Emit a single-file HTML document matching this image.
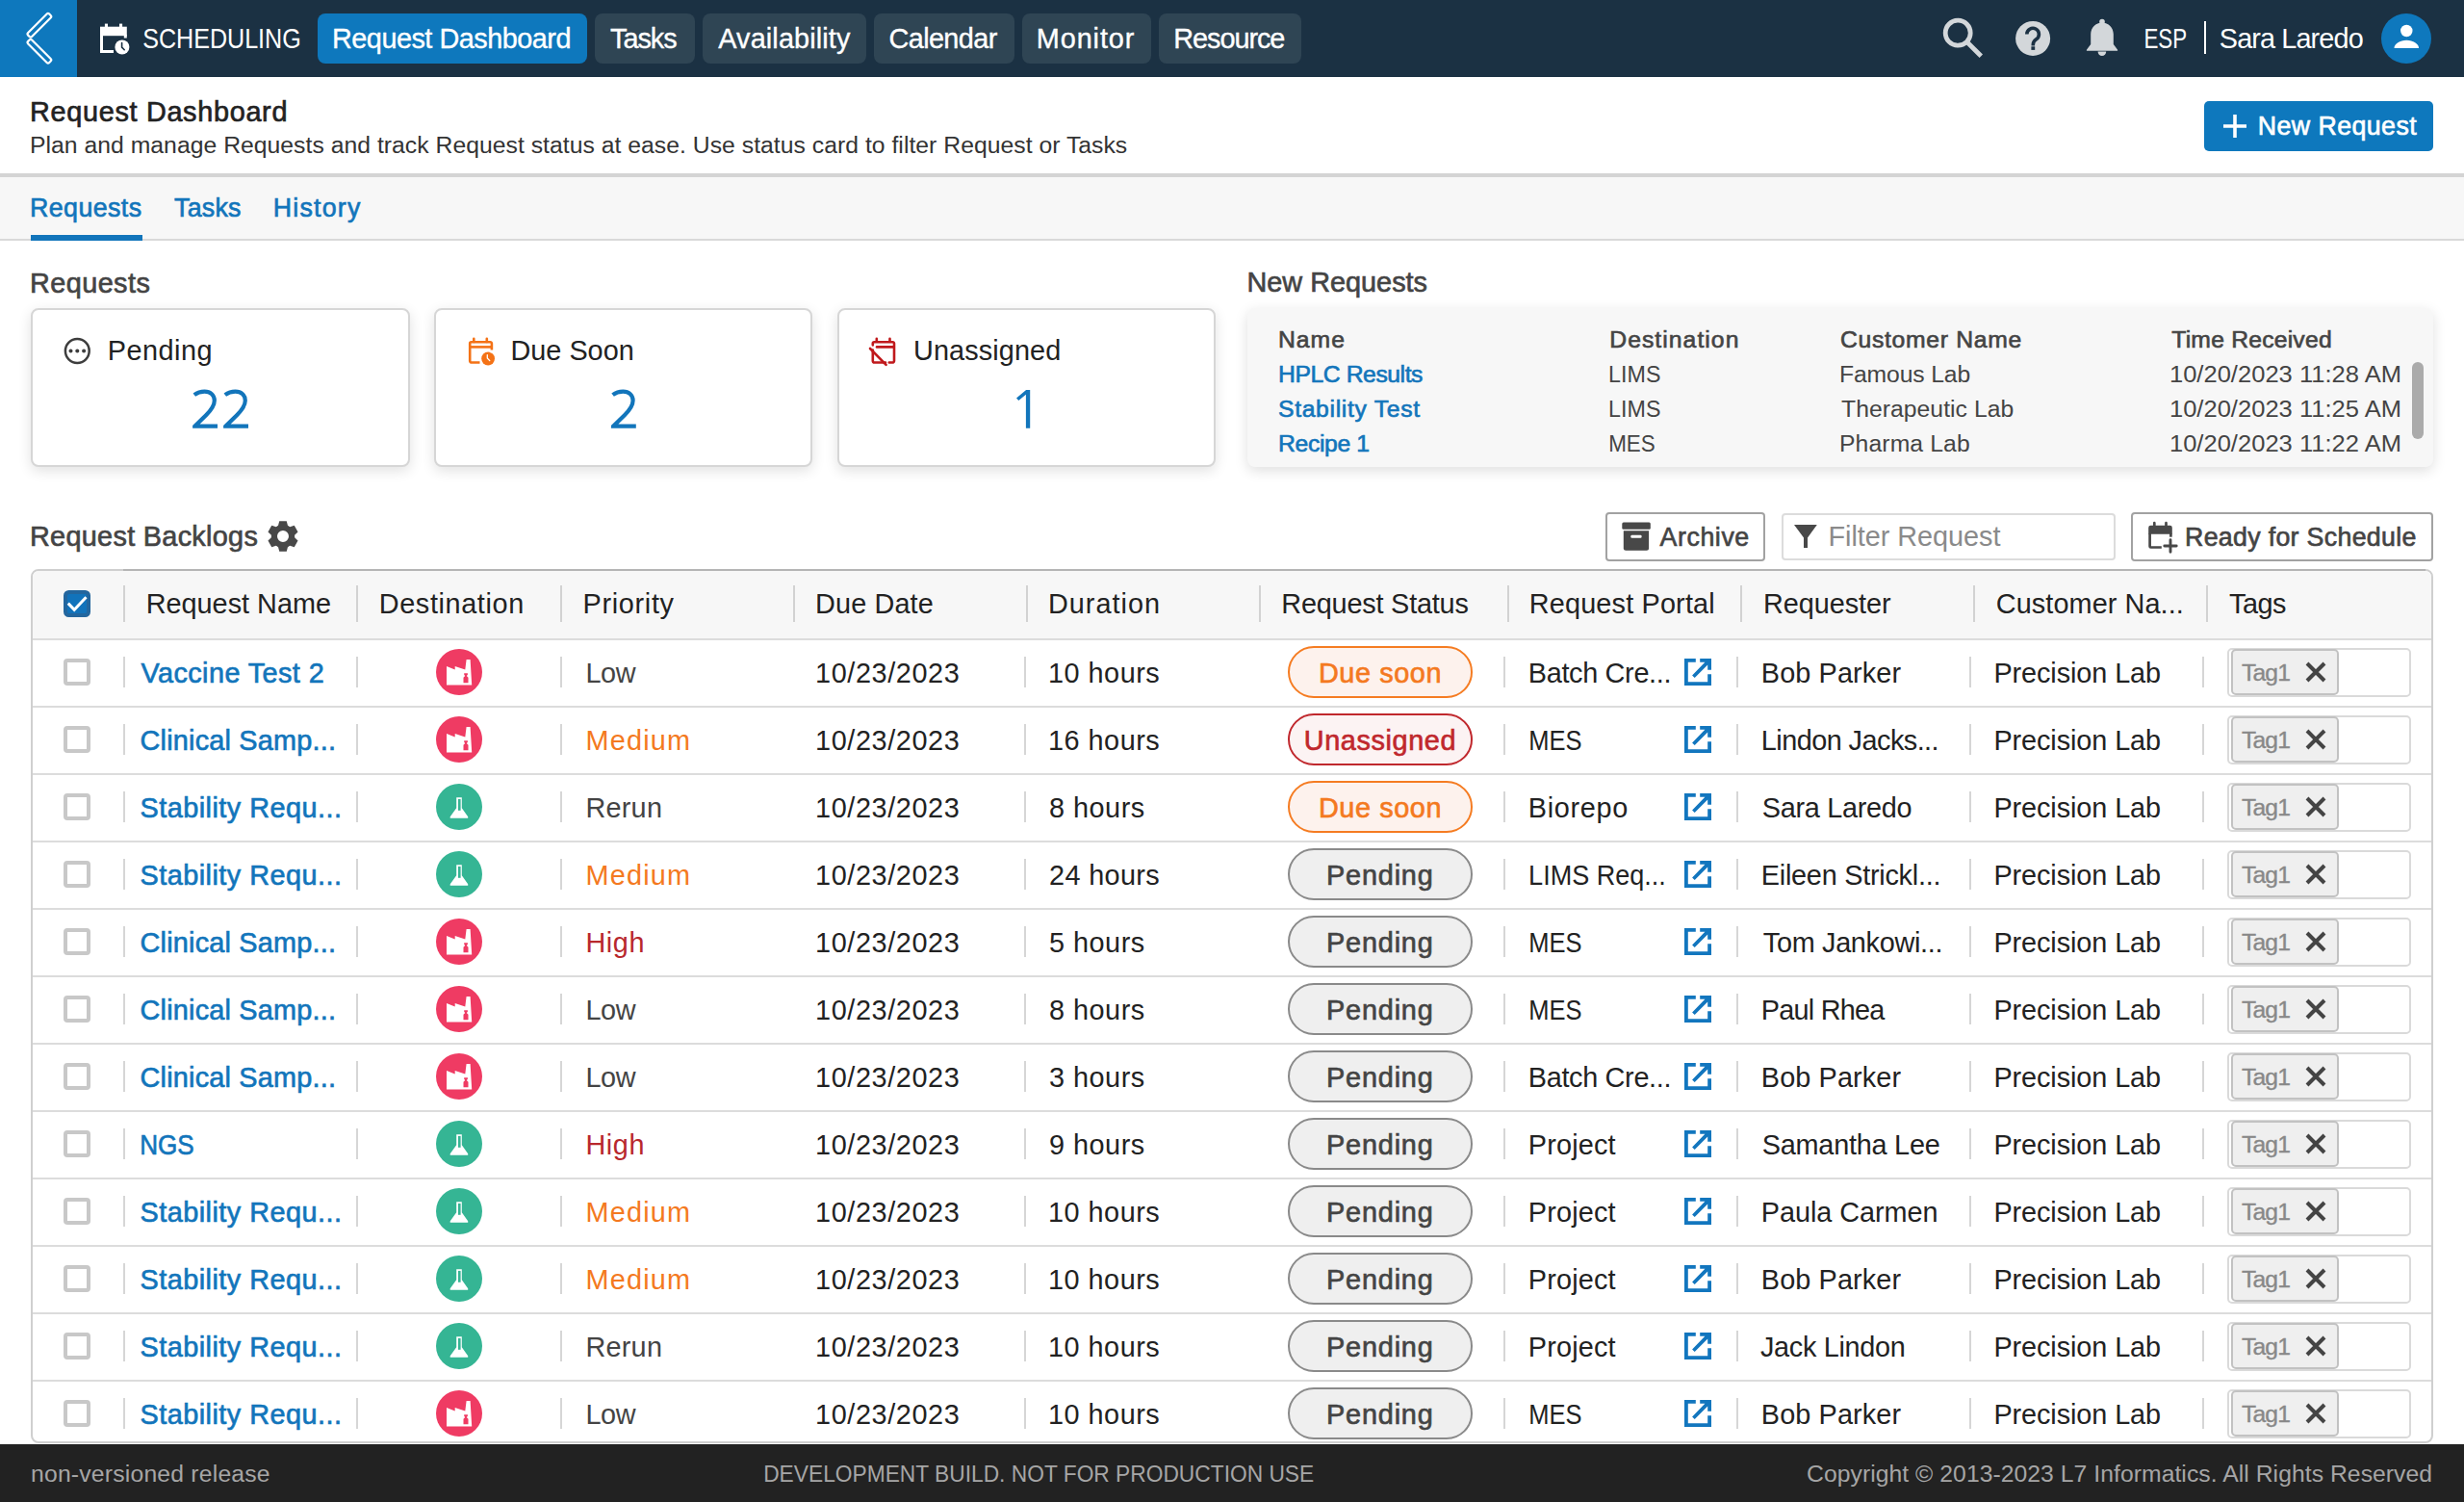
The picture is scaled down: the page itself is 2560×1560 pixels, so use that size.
<!DOCTYPE html><html><head><meta charset="utf-8"><style>
html,body{margin:0;padding:0;width:2560px;height:1560px;overflow:hidden;background:#fff;position:relative}
.t{position:absolute;font-family:"Liberation Sans",sans-serif;white-space:nowrap}
</style></head><body>
<div style="position:absolute;left:0;top:0;width:2560px;height:80px;background:#1b3143"></div>
<div style="position:absolute;left:0;top:0;width:80px;height:80px;background:#0e78bd"></div>
<svg style="position:absolute;left:0;top:0" width="80" height="80" viewBox="0 0 80 80">
<g fill="none" stroke="#fff" stroke-width="2.2">
<rect x="-15.6" y="-2.8" width="31.2" height="5.6" rx="1.8" transform="translate(40.9,26.3) rotate(-45)"/>
<rect x="-15.6" y="-2.8" width="31.2" height="5.6" rx="1.8" transform="translate(40.9,53.2) rotate(45)"/>
</g></svg>
<svg style="position:absolute;left:100px;top:20px" width="40" height="40" viewBox="100 20 40 40">
<path fill="#fff" d="M104 27.7h27.8v9.5h-27.8z"/>
<path fill="none" stroke="#fff" stroke-width="3" d="M105.5 36v17.5h12.5"/>
<path fill="none" stroke="#fff" stroke-width="3" d="M130.3 36v3.5"/>
<rect x="108.9" y="24.6" width="3.1" height="4" fill="#fff"/>
<rect x="124" y="24.6" width="3.1" height="4" fill="#fff"/>
<circle cx="126.9" cy="48.9" r="9" fill="#1b3143"/>
<circle cx="126.9" cy="48.9" r="7.5" fill="#fff"/>
<path fill="none" stroke="#1b3143" stroke-width="1.6" stroke-linecap="round" d="M126.6 44.5v4.6l2.6 2.6"/>
</svg>
<div style="position:absolute;left:330px;top:14px;width:280px;height:52px;border-radius:8px;background:#0e78bd"></div>
<div style="position:absolute;left:618px;top:14px;width:104px;height:52px;border-radius:8px;background:#2f4554"></div>
<div style="position:absolute;left:730px;top:14px;width:170px;height:52px;border-radius:8px;background:#2f4554"></div>
<div style="position:absolute;left:908px;top:14px;width:146px;height:52px;border-radius:8px;background:#2f4554"></div>
<div style="position:absolute;left:1062px;top:14px;width:134px;height:52px;border-radius:8px;background:#2f4554"></div>
<div style="position:absolute;left:1204px;top:14px;width:148px;height:52px;border-radius:8px;background:#2f4554"></div>
<svg style="position:absolute;left:2010px;top:10px" width="60" height="60" viewBox="2010 10 60 60">
<circle cx="2034.2" cy="34.2" r="13" fill="none" stroke="#d3d7da" stroke-width="4.8"/>
<path d="M2044 44l14.3 14.3" stroke="#d3d7da" stroke-width="4.8"/>
</svg>
<svg style="position:absolute;left:2090px;top:18px" width="44" height="44" viewBox="2090 18 44 44">
<circle cx="2112.1" cy="39.9" r="18" fill="#d3d7da"/>
<path d="M2105.8 35.6a6.3 6.3 0 1 1 9.8 5.2c-2 1.4-3.3 2.8-3.3 5.4v1.2" fill="none" stroke="#1b3143" stroke-width="3.6"/>
<rect x="2110.4" y="48.3" width="3.8" height="3.6" fill="#1b3143"/>
</svg>
<svg style="position:absolute;left:2160px;top:14px" width="48" height="48" viewBox="2160 14 48 48">
<circle cx="2184" cy="22.5" r="2.8" fill="#d3d7da"/>
<path fill="#d3d7da" d="M2184 23.4c-6.6 0-11.8 5.2-11.8 12.2v10.5l-4.3 5.7v0.9h32.2v-0.9l-4.3-5.7v-10.5c0-7-5.2-12.2-11.8-12.2z"/>
<path fill="#d3d7da" d="M2179.6 53.6h8.6a4.3 4.3 0 0 1-8.6 0z"/>
</svg>
<div style="position:absolute;left:2290px;top:22px;width:2px;height:34px;background:#fff"></div>
<svg style="position:absolute;left:2474px;top:14px" width="52" height="52" viewBox="0 0 52 52">
<circle cx="26" cy="26" r="26" fill="#0e78bd"/>
<circle cx="26.3" cy="18" r="6.2" fill="#fff"/>
<path fill="#fff" d="M13.5 36c0-4.5 6-8.2 12.8-8.2s12.7 3.7 12.7 8.2z"/>
</svg>
<div style="position:absolute;left:2290px;top:105px;width:238px;height:52px;border-radius:5px;background:#0e78bd"></div>
<svg style="position:absolute;left:2308px;top:117px" width="28" height="28" viewBox="0 0 28 28"><path d="M14 2v24M2 14h24" stroke="#fff" stroke-width="3.6"/></svg>
<div style="position:absolute;left:0;top:180px;width:2560px;height:4px;background:#d4d4d4"></div>
<div style="position:absolute;left:0;top:184px;width:2560px;height:64px;background:#f7f7f7"></div>
<div style="position:absolute;left:0;top:248px;width:2560px;height:2px;background:#d9d9d9"></div>
<div style="position:absolute;left:32px;top:244px;width:116px;height:6px;background:#1275bb"></div>
<div style="position:absolute;left:32px;top:320px;width:390px;height:161px;border:2px solid #d6d6d6;border-radius:8px;background:#fff;box-shadow:0 4px 14px rgba(0,0,0,0.12)"></div>
<div style="position:absolute;left:451px;top:320px;width:389px;height:161px;border:2px solid #d6d6d6;border-radius:8px;background:#fff;box-shadow:0 4px 14px rgba(0,0,0,0.12)"></div>
<div style="position:absolute;left:870px;top:320px;width:389px;height:161px;border:2px solid #d6d6d6;border-radius:8px;background:#fff;box-shadow:0 4px 14px rgba(0,0,0,0.12)"></div>
<svg style="position:absolute;left:0;top:0;overflow:visible" width="1300" height="460"><defs><clipPath id="twoclip"><rect x="0" y="-2" width="30" height="44"/></clipPath></defs><g transform="translate(200.1,404.6)"><path clip-path="url(#twoclip)" d="M1.7 5.6C5 3.1 8.5 2.1 12.4 2.1C18.7 2.1 22.7 5.8 22.7 11.4C22.7 16.6 20.2 20.4 14.2 26.3L2.2 38.1H25.9" fill="none" stroke="#1275bb" stroke-width="4.2" stroke-linejoin="miter"/></g><g transform="translate(232.1,404.6)"><path clip-path="url(#twoclip)" d="M1.7 5.6C5 3.1 8.5 2.1 12.4 2.1C18.7 2.1 22.7 5.8 22.7 11.4C22.7 16.6 20.2 20.4 14.2 26.3L2.2 38.1H25.9" fill="none" stroke="#1275bb" stroke-width="4.2" stroke-linejoin="miter"/></g><g transform="translate(634.9,404.6)"><path clip-path="url(#twoclip)" d="M1.7 5.6C5 3.1 8.5 2.1 12.4 2.1C18.7 2.1 22.7 5.8 22.7 11.4C22.7 16.6 20.2 20.4 14.2 26.3L2.2 38.1H25.9" fill="none" stroke="#1275bb" stroke-width="4.2" stroke-linejoin="miter"/></g><path fill="#1275bb" d="M1056 413.5L1066.1 405.1H1070.2V444.8H1065.9V409.8L1058.3 416.1Z"/></svg>
<svg style="position:absolute;left:60px;top:344px" width="40" height="40" viewBox="60 344 40 40">
<circle cx="80.3" cy="364.5" r="12.4" fill="none" stroke="#3d3d3d" stroke-width="2.5"/>
<circle cx="73.5" cy="364.5" r="2" fill="#3d3d3d"/><circle cx="80.3" cy="364.5" r="2" fill="#3d3d3d"/><circle cx="87.1" cy="364.5" r="2" fill="#3d3d3d"/>
</svg>
<svg style="position:absolute;left:480px;top:344px" width="40" height="40" viewBox="480 344 40 40">
<g fill="none" stroke="#f47216" stroke-width="2.6" stroke-linejoin="round">
<path d="M498.5 376.5h-8.5a1.8 1.8 0 0 1-1.8-1.8v-17.9a1.5 1.5 0 0 1 1.5-1.5h19.7a1.5 1.5 0 0 1 1.5 1.5v6.8"/>
<path d="M488.5 360.4h21.5"/>
<path d="M492.3 351.8v3.2M505.8 351.8v3.2" stroke-linecap="round"/>
</g>
<circle cx="507.1" cy="372.5" r="6.9" fill="#f47216"/>
<path d="M506.3 368.6v3.4l2.5 2.6" fill="none" stroke="#fff" stroke-width="1.3" stroke-linecap="round"/>
</svg>
<svg style="position:absolute;left:896px;top:344px" width="40" height="40" viewBox="896 344 40 40">
<g fill="none" stroke="#c0191c" stroke-width="2.6" stroke-linejoin="round" stroke-linecap="round">
<path d="M906.8 358.4a1.5 1.5 0 0 1 0 -0.4v-1.2a1.5 1.5 0 0 1 1.5-1.5h19.2a1.5 1.5 0 0 1 1.5 1.5v17.9a1.8 1.8 0 0 1-1.8 1.8h-3.4"/>
<path d="M911 360.4h17.3"/>
<path d="M906.8 363.6v11.1a1.8 1.8 0 0 0 1.8 1.8h11.4"/>
<path d="M910.8 351.8v3M924.5 351.8v3"/>
<path d="M904 362l16.6 16.8"/>
</g>
</svg>
<div style="position:absolute;left:1296px;top:320px;width:1232px;height:165px;border-radius:8px;background:#f7f7f7;box-shadow:0 4px 14px rgba(0,0,0,0.13)"></div>
<div style="position:absolute;left:2506px;top:376px;width:12px;height:80px;border-radius:6px;background:#ababab"></div>
<svg style="position:absolute;left:274px;top:537px" width="40" height="40" viewBox="-20 -20 40 40"><path id="gear" fill="#484848" fill-rule="evenodd" d="M4.96 -11.15 L3.78 -15.75 L-3.78 -15.75 L-4.96 -11.15 L-7.17 -9.87 L-11.75 -11.15 L-15.53 -4.60 L-12.13 -1.28 L-12.13 1.28 L-15.53 4.60 L-11.75 11.15 L-7.17 9.87 L-4.96 11.15 L-3.78 15.75 L3.78 15.75 L4.96 11.15 L7.17 9.87 L11.75 11.15 L15.53 4.60 L12.13 1.28 L12.13 -1.28 L15.53 -4.60 L11.75 -11.15 L7.17 -9.87Z M6 0 A6 6 0 1 0 -6 0 A6 6 0 1 0 6 0Z"/></svg>
<div style="position:absolute;left:1668px;top:532px;width:162px;height:47px;border:2px solid #a2a2a2;border-radius:4px;background:#fff"></div>
<svg style="position:absolute;left:1680px;top:538px" width="40" height="40" viewBox="1680 538 40 40">
<rect x="1685.3" y="542.5" width="29.5" height="7.3" rx="1.5" fill="#484848"/>
<path d="M1686.8 551.3h26.3v18a2.5 2.5 0 0 1-2.5 2.5h-21.3a2.5 2.5 0 0 1-2.5-2.5z" fill="#484848"/>
<rect x="1694.3" y="555.8" width="11.3" height="3" rx="1.2" fill="#fff"/>
</svg>
<div style="position:absolute;left:1851px;top:533px;width:343px;height:45px;border:2px solid #dcdcdc;border-radius:4px;background:#fff"></div>
<svg style="position:absolute;left:1860px;top:540px" width="32" height="32" viewBox="1860 540 32 32">
<path d="M1864 545h23.8l-9.8 13.6v10.4h-4v-10.4z" fill="#484848"/>
</svg>
<div style="position:absolute;left:2214px;top:532px;width:310px;height:47px;border:2px solid #a2a2a2;border-radius:4px;background:#fff"></div>
<svg style="position:absolute;left:2226px;top:538px" width="40" height="40" viewBox="2226 538 40 40">
<path d="M2232.2 548a2.3 2.3 0 0 1 2.3-2.3h20a2.3 2.3 0 0 1 2.3 2.3v6.8h-24.6z" fill="#484848"/>
<g fill="none" stroke="#484848" stroke-width="2.7">
<path d="M2233.6 554v13.5a1 1 0 0 0 1 1h11.2"/>
<path d="M2255.4 554v3.7"/>
<path d="M2238.3 543.2v3M2250.5 543.2v3" stroke-linecap="round"/>
<path d="M2255 560.8v12.4M2248.8 567h12.4" stroke-linecap="round" stroke-width="2.9"/>
</g>
</svg>
<div style="position:absolute;left:32px;top:591px;width:2492px;height:904px;border:2px solid #cfcfcf;border-radius:8px;background:#fff;overflow:hidden"><div style="position:absolute;left:0;top:0;width:100%;height:72px;background:#f7f7f7"></div></div><div style="position:absolute;left:128px;top:591px;width:2392px;height:2px;background:#b5b5b5"></div>
<div style="position:absolute;left:34px;top:663px;width:2492px;height:2px;background:#dcdcdc"></div>
<svg style="position:absolute;left:66px;top:613px" width="28" height="28" viewBox="0 0 28 28">
<rect x="2" y="2" width="24" height="24" rx="3.5" fill="#1273bb" stroke="#23669e" stroke-width="4"/>
<path d="M4.8 13.6l6.4 6.7 12.3-13" fill="none" stroke="#fff" stroke-width="3"/>
</svg>
<div style="position:absolute;left:128px;top:608px;width:2px;height:38px;background:#d2d2d2"></div>
<div style="position:absolute;left:370px;top:608px;width:2px;height:38px;background:#d2d2d2"></div>
<div style="position:absolute;left:582px;top:608px;width:2px;height:38px;background:#d2d2d2"></div>
<div style="position:absolute;left:824px;top:608px;width:2px;height:38px;background:#d2d2d2"></div>
<div style="position:absolute;left:1066px;top:608px;width:2px;height:38px;background:#d2d2d2"></div>
<div style="position:absolute;left:1308px;top:608px;width:2px;height:38px;background:#d2d2d2"></div>
<div style="position:absolute;left:1566px;top:608px;width:2px;height:38px;background:#d2d2d2"></div>
<div style="position:absolute;left:1808px;top:608px;width:2px;height:38px;background:#d2d2d2"></div>
<div style="position:absolute;left:2050px;top:608px;width:2px;height:38px;background:#d2d2d2"></div>
<div style="position:absolute;left:2292px;top:608px;width:2px;height:38px;background:#d2d2d2"></div>
<div style="position:absolute;left:34px;top:733px;width:2492px;height:2px;background:#dcdcdc"></div>
<div style="position:absolute;left:66px;top:684px;width:20px;height:20px;border:4px solid #c8c8c8;border-radius:4px;background:#fff"></div>
<div style="position:absolute;left:128px;top:682px;width:2px;height:32px;background:#d6d6d6"></div>
<div style="position:absolute;left:370px;top:682px;width:2px;height:32px;background:#d6d6d6"></div>
<div style="position:absolute;left:582px;top:682px;width:2px;height:32px;background:#d6d6d6"></div>
<div style="position:absolute;left:1064px;top:682px;width:2px;height:32px;background:#d6d6d6"></div>
<div style="position:absolute;left:1562px;top:682px;width:2px;height:32px;background:#d6d6d6"></div>
<div style="position:absolute;left:1804px;top:682px;width:2px;height:32px;background:#d6d6d6"></div>
<div style="position:absolute;left:2046px;top:682px;width:2px;height:32px;background:#d6d6d6"></div>
<div style="position:absolute;left:2288px;top:682px;width:2px;height:32px;background:#d6d6d6"></div>
<svg style="position:absolute;left:453px;top:674px" width="48" height="48" viewBox="0 0 48 48"><circle cx="24" cy="24" r="24" fill="#ef3b63"/><path fill="#fff" d="M11 18l8.7 3.4v-3.4l10.6 3.4 1.3-10.5h4l1.6 26.7h-26.2z"/><path fill="#ef3b63" d="M29.2 25.3h3.7v1.4l-1.1 1.2 1.7 1.9v5.4h-5v-5.4l1.7-1.9-1-1.2z"/></svg>
<div style="position:absolute;left:1338px;top:671px;width:188px;height:50px;border:2px solid #f57c22;border-radius:27px;background:#fdf2ed"></div>
<svg style="position:absolute;left:1750px;top:684px" width="28" height="28" viewBox="0 0 28 28"><g fill="#1276be">
<path d="M0 0h11.8v3.8h-8v20.4h20.4v-8h3.8v11.8h-28z"/><path d="M16.2 0h11.8v11.8h-3.8v-5.3l-13.5 13.5-2.6-2.6 13.3-13.6h-5.2z"/></g></svg>
<div style="position:absolute;left:2314px;top:672.5px;width:187px;height:47px;border:2px solid #dadada;border-radius:5px;background:#fff"></div>
<div style="position:absolute;left:2318px;top:674.4px;width:107.5px;height:43.4px;border:2px solid #c2c2c2;border-radius:5px;background:#efefef"></div>
<svg style="position:absolute;left:2394px;top:686px" width="24" height="24" viewBox="0 0 24 24"><path d="M3 3l18 18M21 3l-18 18" stroke="#444" stroke-width="4"/></svg>
<div style="position:absolute;left:34px;top:803px;width:2492px;height:2px;background:#dcdcdc"></div>
<div style="position:absolute;left:66px;top:754px;width:20px;height:20px;border:4px solid #c8c8c8;border-radius:4px;background:#fff"></div>
<div style="position:absolute;left:128px;top:752px;width:2px;height:32px;background:#d6d6d6"></div>
<div style="position:absolute;left:370px;top:752px;width:2px;height:32px;background:#d6d6d6"></div>
<div style="position:absolute;left:582px;top:752px;width:2px;height:32px;background:#d6d6d6"></div>
<div style="position:absolute;left:1064px;top:752px;width:2px;height:32px;background:#d6d6d6"></div>
<div style="position:absolute;left:1562px;top:752px;width:2px;height:32px;background:#d6d6d6"></div>
<div style="position:absolute;left:1804px;top:752px;width:2px;height:32px;background:#d6d6d6"></div>
<div style="position:absolute;left:2046px;top:752px;width:2px;height:32px;background:#d6d6d6"></div>
<div style="position:absolute;left:2288px;top:752px;width:2px;height:32px;background:#d6d6d6"></div>
<svg style="position:absolute;left:453px;top:744px" width="48" height="48" viewBox="0 0 48 48"><circle cx="24" cy="24" r="24" fill="#ef3b63"/><path fill="#fff" d="M11 18l8.7 3.4v-3.4l10.6 3.4 1.3-10.5h4l1.6 26.7h-26.2z"/><path fill="#ef3b63" d="M29.2 25.3h3.7v1.4l-1.1 1.2 1.7 1.9v5.4h-5v-5.4l1.7-1.9-1-1.2z"/></svg>
<div style="position:absolute;left:1338px;top:741px;width:188px;height:50px;border:2px solid #c0282d;border-radius:27px;background:#fcf3f3"></div>
<svg style="position:absolute;left:1750px;top:754px" width="28" height="28" viewBox="0 0 28 28"><g fill="#1276be">
<path d="M0 0h11.8v3.8h-8v20.4h20.4v-8h3.8v11.8h-28z"/><path d="M16.2 0h11.8v11.8h-3.8v-5.3l-13.5 13.5-2.6-2.6 13.3-13.6h-5.2z"/></g></svg>
<div style="position:absolute;left:2314px;top:742.5px;width:187px;height:47px;border:2px solid #dadada;border-radius:5px;background:#fff"></div>
<div style="position:absolute;left:2318px;top:744.4px;width:107.5px;height:43.4px;border:2px solid #c2c2c2;border-radius:5px;background:#efefef"></div>
<svg style="position:absolute;left:2394px;top:756px" width="24" height="24" viewBox="0 0 24 24"><path d="M3 3l18 18M21 3l-18 18" stroke="#444" stroke-width="4"/></svg>
<div style="position:absolute;left:34px;top:873px;width:2492px;height:2px;background:#dcdcdc"></div>
<div style="position:absolute;left:66px;top:824px;width:20px;height:20px;border:4px solid #c8c8c8;border-radius:4px;background:#fff"></div>
<div style="position:absolute;left:128px;top:822px;width:2px;height:32px;background:#d6d6d6"></div>
<div style="position:absolute;left:370px;top:822px;width:2px;height:32px;background:#d6d6d6"></div>
<div style="position:absolute;left:582px;top:822px;width:2px;height:32px;background:#d6d6d6"></div>
<div style="position:absolute;left:1064px;top:822px;width:2px;height:32px;background:#d6d6d6"></div>
<div style="position:absolute;left:1562px;top:822px;width:2px;height:32px;background:#d6d6d6"></div>
<div style="position:absolute;left:1804px;top:822px;width:2px;height:32px;background:#d6d6d6"></div>
<div style="position:absolute;left:2046px;top:822px;width:2px;height:32px;background:#d6d6d6"></div>
<div style="position:absolute;left:2288px;top:822px;width:2px;height:32px;background:#d6d6d6"></div>
<svg style="position:absolute;left:453px;top:814px" width="48" height="48" viewBox="0 0 48 48"><circle cx="24" cy="24" r="24" fill="#35b594"/><path fill="#fff" d="M21.2 14.3h5.6v11l6.4 9v1.5h-18.5v-1.5l6.5-9z"/><path fill="#35b594" d="M23 15.9h2.6v11.9h-2.6z"/></svg>
<div style="position:absolute;left:1338px;top:811px;width:188px;height:50px;border:2px solid #f57c22;border-radius:27px;background:#fdf2ed"></div>
<svg style="position:absolute;left:1750px;top:824px" width="28" height="28" viewBox="0 0 28 28"><g fill="#1276be">
<path d="M0 0h11.8v3.8h-8v20.4h20.4v-8h3.8v11.8h-28z"/><path d="M16.2 0h11.8v11.8h-3.8v-5.3l-13.5 13.5-2.6-2.6 13.3-13.6h-5.2z"/></g></svg>
<div style="position:absolute;left:2314px;top:812.5px;width:187px;height:47px;border:2px solid #dadada;border-radius:5px;background:#fff"></div>
<div style="position:absolute;left:2318px;top:814.4px;width:107.5px;height:43.4px;border:2px solid #c2c2c2;border-radius:5px;background:#efefef"></div>
<svg style="position:absolute;left:2394px;top:826px" width="24" height="24" viewBox="0 0 24 24"><path d="M3 3l18 18M21 3l-18 18" stroke="#444" stroke-width="4"/></svg>
<div style="position:absolute;left:34px;top:943px;width:2492px;height:2px;background:#dcdcdc"></div>
<div style="position:absolute;left:66px;top:894px;width:20px;height:20px;border:4px solid #c8c8c8;border-radius:4px;background:#fff"></div>
<div style="position:absolute;left:128px;top:892px;width:2px;height:32px;background:#d6d6d6"></div>
<div style="position:absolute;left:370px;top:892px;width:2px;height:32px;background:#d6d6d6"></div>
<div style="position:absolute;left:582px;top:892px;width:2px;height:32px;background:#d6d6d6"></div>
<div style="position:absolute;left:1064px;top:892px;width:2px;height:32px;background:#d6d6d6"></div>
<div style="position:absolute;left:1562px;top:892px;width:2px;height:32px;background:#d6d6d6"></div>
<div style="position:absolute;left:1804px;top:892px;width:2px;height:32px;background:#d6d6d6"></div>
<div style="position:absolute;left:2046px;top:892px;width:2px;height:32px;background:#d6d6d6"></div>
<div style="position:absolute;left:2288px;top:892px;width:2px;height:32px;background:#d6d6d6"></div>
<svg style="position:absolute;left:453px;top:884px" width="48" height="48" viewBox="0 0 48 48"><circle cx="24" cy="24" r="24" fill="#35b594"/><path fill="#fff" d="M21.2 14.3h5.6v11l6.4 9v1.5h-18.5v-1.5l6.5-9z"/><path fill="#35b594" d="M23 15.9h2.6v11.9h-2.6z"/></svg>
<div style="position:absolute;left:1338px;top:881px;width:188px;height:50px;border:2px solid #8a8a8a;border-radius:27px;background:#efefef"></div>
<svg style="position:absolute;left:1750px;top:894px" width="28" height="28" viewBox="0 0 28 28"><g fill="#1276be">
<path d="M0 0h11.8v3.8h-8v20.4h20.4v-8h3.8v11.8h-28z"/><path d="M16.2 0h11.8v11.8h-3.8v-5.3l-13.5 13.5-2.6-2.6 13.3-13.6h-5.2z"/></g></svg>
<div style="position:absolute;left:2314px;top:882.5px;width:187px;height:47px;border:2px solid #dadada;border-radius:5px;background:#fff"></div>
<div style="position:absolute;left:2318px;top:884.4px;width:107.5px;height:43.4px;border:2px solid #c2c2c2;border-radius:5px;background:#efefef"></div>
<svg style="position:absolute;left:2394px;top:896px" width="24" height="24" viewBox="0 0 24 24"><path d="M3 3l18 18M21 3l-18 18" stroke="#444" stroke-width="4"/></svg>
<div style="position:absolute;left:34px;top:1013px;width:2492px;height:2px;background:#dcdcdc"></div>
<div style="position:absolute;left:66px;top:964px;width:20px;height:20px;border:4px solid #c8c8c8;border-radius:4px;background:#fff"></div>
<div style="position:absolute;left:128px;top:962px;width:2px;height:32px;background:#d6d6d6"></div>
<div style="position:absolute;left:370px;top:962px;width:2px;height:32px;background:#d6d6d6"></div>
<div style="position:absolute;left:582px;top:962px;width:2px;height:32px;background:#d6d6d6"></div>
<div style="position:absolute;left:1064px;top:962px;width:2px;height:32px;background:#d6d6d6"></div>
<div style="position:absolute;left:1562px;top:962px;width:2px;height:32px;background:#d6d6d6"></div>
<div style="position:absolute;left:1804px;top:962px;width:2px;height:32px;background:#d6d6d6"></div>
<div style="position:absolute;left:2046px;top:962px;width:2px;height:32px;background:#d6d6d6"></div>
<div style="position:absolute;left:2288px;top:962px;width:2px;height:32px;background:#d6d6d6"></div>
<svg style="position:absolute;left:453px;top:954px" width="48" height="48" viewBox="0 0 48 48"><circle cx="24" cy="24" r="24" fill="#ef3b63"/><path fill="#fff" d="M11 18l8.7 3.4v-3.4l10.6 3.4 1.3-10.5h4l1.6 26.7h-26.2z"/><path fill="#ef3b63" d="M29.2 25.3h3.7v1.4l-1.1 1.2 1.7 1.9v5.4h-5v-5.4l1.7-1.9-1-1.2z"/></svg>
<div style="position:absolute;left:1338px;top:951px;width:188px;height:50px;border:2px solid #8a8a8a;border-radius:27px;background:#efefef"></div>
<svg style="position:absolute;left:1750px;top:964px" width="28" height="28" viewBox="0 0 28 28"><g fill="#1276be">
<path d="M0 0h11.8v3.8h-8v20.4h20.4v-8h3.8v11.8h-28z"/><path d="M16.2 0h11.8v11.8h-3.8v-5.3l-13.5 13.5-2.6-2.6 13.3-13.6h-5.2z"/></g></svg>
<div style="position:absolute;left:2314px;top:952.5px;width:187px;height:47px;border:2px solid #dadada;border-radius:5px;background:#fff"></div>
<div style="position:absolute;left:2318px;top:954.4px;width:107.5px;height:43.4px;border:2px solid #c2c2c2;border-radius:5px;background:#efefef"></div>
<svg style="position:absolute;left:2394px;top:966px" width="24" height="24" viewBox="0 0 24 24"><path d="M3 3l18 18M21 3l-18 18" stroke="#444" stroke-width="4"/></svg>
<div style="position:absolute;left:34px;top:1083px;width:2492px;height:2px;background:#dcdcdc"></div>
<div style="position:absolute;left:66px;top:1034px;width:20px;height:20px;border:4px solid #c8c8c8;border-radius:4px;background:#fff"></div>
<div style="position:absolute;left:128px;top:1032px;width:2px;height:32px;background:#d6d6d6"></div>
<div style="position:absolute;left:370px;top:1032px;width:2px;height:32px;background:#d6d6d6"></div>
<div style="position:absolute;left:582px;top:1032px;width:2px;height:32px;background:#d6d6d6"></div>
<div style="position:absolute;left:1064px;top:1032px;width:2px;height:32px;background:#d6d6d6"></div>
<div style="position:absolute;left:1562px;top:1032px;width:2px;height:32px;background:#d6d6d6"></div>
<div style="position:absolute;left:1804px;top:1032px;width:2px;height:32px;background:#d6d6d6"></div>
<div style="position:absolute;left:2046px;top:1032px;width:2px;height:32px;background:#d6d6d6"></div>
<div style="position:absolute;left:2288px;top:1032px;width:2px;height:32px;background:#d6d6d6"></div>
<svg style="position:absolute;left:453px;top:1024px" width="48" height="48" viewBox="0 0 48 48"><circle cx="24" cy="24" r="24" fill="#ef3b63"/><path fill="#fff" d="M11 18l8.7 3.4v-3.4l10.6 3.4 1.3-10.5h4l1.6 26.7h-26.2z"/><path fill="#ef3b63" d="M29.2 25.3h3.7v1.4l-1.1 1.2 1.7 1.9v5.4h-5v-5.4l1.7-1.9-1-1.2z"/></svg>
<div style="position:absolute;left:1338px;top:1021px;width:188px;height:50px;border:2px solid #8a8a8a;border-radius:27px;background:#efefef"></div>
<svg style="position:absolute;left:1750px;top:1034px" width="28" height="28" viewBox="0 0 28 28"><g fill="#1276be">
<path d="M0 0h11.8v3.8h-8v20.4h20.4v-8h3.8v11.8h-28z"/><path d="M16.2 0h11.8v11.8h-3.8v-5.3l-13.5 13.5-2.6-2.6 13.3-13.6h-5.2z"/></g></svg>
<div style="position:absolute;left:2314px;top:1022.5px;width:187px;height:47px;border:2px solid #dadada;border-radius:5px;background:#fff"></div>
<div style="position:absolute;left:2318px;top:1024.4px;width:107.5px;height:43.4px;border:2px solid #c2c2c2;border-radius:5px;background:#efefef"></div>
<svg style="position:absolute;left:2394px;top:1036px" width="24" height="24" viewBox="0 0 24 24"><path d="M3 3l18 18M21 3l-18 18" stroke="#444" stroke-width="4"/></svg>
<div style="position:absolute;left:34px;top:1153px;width:2492px;height:2px;background:#dcdcdc"></div>
<div style="position:absolute;left:66px;top:1104px;width:20px;height:20px;border:4px solid #c8c8c8;border-radius:4px;background:#fff"></div>
<div style="position:absolute;left:128px;top:1102px;width:2px;height:32px;background:#d6d6d6"></div>
<div style="position:absolute;left:370px;top:1102px;width:2px;height:32px;background:#d6d6d6"></div>
<div style="position:absolute;left:582px;top:1102px;width:2px;height:32px;background:#d6d6d6"></div>
<div style="position:absolute;left:1064px;top:1102px;width:2px;height:32px;background:#d6d6d6"></div>
<div style="position:absolute;left:1562px;top:1102px;width:2px;height:32px;background:#d6d6d6"></div>
<div style="position:absolute;left:1804px;top:1102px;width:2px;height:32px;background:#d6d6d6"></div>
<div style="position:absolute;left:2046px;top:1102px;width:2px;height:32px;background:#d6d6d6"></div>
<div style="position:absolute;left:2288px;top:1102px;width:2px;height:32px;background:#d6d6d6"></div>
<svg style="position:absolute;left:453px;top:1094px" width="48" height="48" viewBox="0 0 48 48"><circle cx="24" cy="24" r="24" fill="#ef3b63"/><path fill="#fff" d="M11 18l8.7 3.4v-3.4l10.6 3.4 1.3-10.5h4l1.6 26.7h-26.2z"/><path fill="#ef3b63" d="M29.2 25.3h3.7v1.4l-1.1 1.2 1.7 1.9v5.4h-5v-5.4l1.7-1.9-1-1.2z"/></svg>
<div style="position:absolute;left:1338px;top:1091px;width:188px;height:50px;border:2px solid #8a8a8a;border-radius:27px;background:#efefef"></div>
<svg style="position:absolute;left:1750px;top:1104px" width="28" height="28" viewBox="0 0 28 28"><g fill="#1276be">
<path d="M0 0h11.8v3.8h-8v20.4h20.4v-8h3.8v11.8h-28z"/><path d="M16.2 0h11.8v11.8h-3.8v-5.3l-13.5 13.5-2.6-2.6 13.3-13.6h-5.2z"/></g></svg>
<div style="position:absolute;left:2314px;top:1092.5px;width:187px;height:47px;border:2px solid #dadada;border-radius:5px;background:#fff"></div>
<div style="position:absolute;left:2318px;top:1094.4px;width:107.5px;height:43.4px;border:2px solid #c2c2c2;border-radius:5px;background:#efefef"></div>
<svg style="position:absolute;left:2394px;top:1106px" width="24" height="24" viewBox="0 0 24 24"><path d="M3 3l18 18M21 3l-18 18" stroke="#444" stroke-width="4"/></svg>
<div style="position:absolute;left:34px;top:1223px;width:2492px;height:2px;background:#dcdcdc"></div>
<div style="position:absolute;left:66px;top:1174px;width:20px;height:20px;border:4px solid #c8c8c8;border-radius:4px;background:#fff"></div>
<div style="position:absolute;left:128px;top:1172px;width:2px;height:32px;background:#d6d6d6"></div>
<div style="position:absolute;left:370px;top:1172px;width:2px;height:32px;background:#d6d6d6"></div>
<div style="position:absolute;left:582px;top:1172px;width:2px;height:32px;background:#d6d6d6"></div>
<div style="position:absolute;left:1064px;top:1172px;width:2px;height:32px;background:#d6d6d6"></div>
<div style="position:absolute;left:1562px;top:1172px;width:2px;height:32px;background:#d6d6d6"></div>
<div style="position:absolute;left:1804px;top:1172px;width:2px;height:32px;background:#d6d6d6"></div>
<div style="position:absolute;left:2046px;top:1172px;width:2px;height:32px;background:#d6d6d6"></div>
<div style="position:absolute;left:2288px;top:1172px;width:2px;height:32px;background:#d6d6d6"></div>
<svg style="position:absolute;left:453px;top:1164px" width="48" height="48" viewBox="0 0 48 48"><circle cx="24" cy="24" r="24" fill="#35b594"/><path fill="#fff" d="M21.2 14.3h5.6v11l6.4 9v1.5h-18.5v-1.5l6.5-9z"/><path fill="#35b594" d="M23 15.9h2.6v11.9h-2.6z"/></svg>
<div style="position:absolute;left:1338px;top:1161px;width:188px;height:50px;border:2px solid #8a8a8a;border-radius:27px;background:#efefef"></div>
<svg style="position:absolute;left:1750px;top:1174px" width="28" height="28" viewBox="0 0 28 28"><g fill="#1276be">
<path d="M0 0h11.8v3.8h-8v20.4h20.4v-8h3.8v11.8h-28z"/><path d="M16.2 0h11.8v11.8h-3.8v-5.3l-13.5 13.5-2.6-2.6 13.3-13.6h-5.2z"/></g></svg>
<div style="position:absolute;left:2314px;top:1162.5px;width:187px;height:47px;border:2px solid #dadada;border-radius:5px;background:#fff"></div>
<div style="position:absolute;left:2318px;top:1164.4px;width:107.5px;height:43.4px;border:2px solid #c2c2c2;border-radius:5px;background:#efefef"></div>
<svg style="position:absolute;left:2394px;top:1176px" width="24" height="24" viewBox="0 0 24 24"><path d="M3 3l18 18M21 3l-18 18" stroke="#444" stroke-width="4"/></svg>
<div style="position:absolute;left:34px;top:1293px;width:2492px;height:2px;background:#dcdcdc"></div>
<div style="position:absolute;left:66px;top:1244px;width:20px;height:20px;border:4px solid #c8c8c8;border-radius:4px;background:#fff"></div>
<div style="position:absolute;left:128px;top:1242px;width:2px;height:32px;background:#d6d6d6"></div>
<div style="position:absolute;left:370px;top:1242px;width:2px;height:32px;background:#d6d6d6"></div>
<div style="position:absolute;left:582px;top:1242px;width:2px;height:32px;background:#d6d6d6"></div>
<div style="position:absolute;left:1064px;top:1242px;width:2px;height:32px;background:#d6d6d6"></div>
<div style="position:absolute;left:1562px;top:1242px;width:2px;height:32px;background:#d6d6d6"></div>
<div style="position:absolute;left:1804px;top:1242px;width:2px;height:32px;background:#d6d6d6"></div>
<div style="position:absolute;left:2046px;top:1242px;width:2px;height:32px;background:#d6d6d6"></div>
<div style="position:absolute;left:2288px;top:1242px;width:2px;height:32px;background:#d6d6d6"></div>
<svg style="position:absolute;left:453px;top:1234px" width="48" height="48" viewBox="0 0 48 48"><circle cx="24" cy="24" r="24" fill="#35b594"/><path fill="#fff" d="M21.2 14.3h5.6v11l6.4 9v1.5h-18.5v-1.5l6.5-9z"/><path fill="#35b594" d="M23 15.9h2.6v11.9h-2.6z"/></svg>
<div style="position:absolute;left:1338px;top:1231px;width:188px;height:50px;border:2px solid #8a8a8a;border-radius:27px;background:#efefef"></div>
<svg style="position:absolute;left:1750px;top:1244px" width="28" height="28" viewBox="0 0 28 28"><g fill="#1276be">
<path d="M0 0h11.8v3.8h-8v20.4h20.4v-8h3.8v11.8h-28z"/><path d="M16.2 0h11.8v11.8h-3.8v-5.3l-13.5 13.5-2.6-2.6 13.3-13.6h-5.2z"/></g></svg>
<div style="position:absolute;left:2314px;top:1232.5px;width:187px;height:47px;border:2px solid #dadada;border-radius:5px;background:#fff"></div>
<div style="position:absolute;left:2318px;top:1234.4px;width:107.5px;height:43.4px;border:2px solid #c2c2c2;border-radius:5px;background:#efefef"></div>
<svg style="position:absolute;left:2394px;top:1246px" width="24" height="24" viewBox="0 0 24 24"><path d="M3 3l18 18M21 3l-18 18" stroke="#444" stroke-width="4"/></svg>
<div style="position:absolute;left:34px;top:1363px;width:2492px;height:2px;background:#dcdcdc"></div>
<div style="position:absolute;left:66px;top:1314px;width:20px;height:20px;border:4px solid #c8c8c8;border-radius:4px;background:#fff"></div>
<div style="position:absolute;left:128px;top:1312px;width:2px;height:32px;background:#d6d6d6"></div>
<div style="position:absolute;left:370px;top:1312px;width:2px;height:32px;background:#d6d6d6"></div>
<div style="position:absolute;left:582px;top:1312px;width:2px;height:32px;background:#d6d6d6"></div>
<div style="position:absolute;left:1064px;top:1312px;width:2px;height:32px;background:#d6d6d6"></div>
<div style="position:absolute;left:1562px;top:1312px;width:2px;height:32px;background:#d6d6d6"></div>
<div style="position:absolute;left:1804px;top:1312px;width:2px;height:32px;background:#d6d6d6"></div>
<div style="position:absolute;left:2046px;top:1312px;width:2px;height:32px;background:#d6d6d6"></div>
<div style="position:absolute;left:2288px;top:1312px;width:2px;height:32px;background:#d6d6d6"></div>
<svg style="position:absolute;left:453px;top:1304px" width="48" height="48" viewBox="0 0 48 48"><circle cx="24" cy="24" r="24" fill="#35b594"/><path fill="#fff" d="M21.2 14.3h5.6v11l6.4 9v1.5h-18.5v-1.5l6.5-9z"/><path fill="#35b594" d="M23 15.9h2.6v11.9h-2.6z"/></svg>
<div style="position:absolute;left:1338px;top:1301px;width:188px;height:50px;border:2px solid #8a8a8a;border-radius:27px;background:#efefef"></div>
<svg style="position:absolute;left:1750px;top:1314px" width="28" height="28" viewBox="0 0 28 28"><g fill="#1276be">
<path d="M0 0h11.8v3.8h-8v20.4h20.4v-8h3.8v11.8h-28z"/><path d="M16.2 0h11.8v11.8h-3.8v-5.3l-13.5 13.5-2.6-2.6 13.3-13.6h-5.2z"/></g></svg>
<div style="position:absolute;left:2314px;top:1302.5px;width:187px;height:47px;border:2px solid #dadada;border-radius:5px;background:#fff"></div>
<div style="position:absolute;left:2318px;top:1304.4px;width:107.5px;height:43.4px;border:2px solid #c2c2c2;border-radius:5px;background:#efefef"></div>
<svg style="position:absolute;left:2394px;top:1316px" width="24" height="24" viewBox="0 0 24 24"><path d="M3 3l18 18M21 3l-18 18" stroke="#444" stroke-width="4"/></svg>
<div style="position:absolute;left:34px;top:1433px;width:2492px;height:2px;background:#dcdcdc"></div>
<div style="position:absolute;left:66px;top:1384px;width:20px;height:20px;border:4px solid #c8c8c8;border-radius:4px;background:#fff"></div>
<div style="position:absolute;left:128px;top:1382px;width:2px;height:32px;background:#d6d6d6"></div>
<div style="position:absolute;left:370px;top:1382px;width:2px;height:32px;background:#d6d6d6"></div>
<div style="position:absolute;left:582px;top:1382px;width:2px;height:32px;background:#d6d6d6"></div>
<div style="position:absolute;left:1064px;top:1382px;width:2px;height:32px;background:#d6d6d6"></div>
<div style="position:absolute;left:1562px;top:1382px;width:2px;height:32px;background:#d6d6d6"></div>
<div style="position:absolute;left:1804px;top:1382px;width:2px;height:32px;background:#d6d6d6"></div>
<div style="position:absolute;left:2046px;top:1382px;width:2px;height:32px;background:#d6d6d6"></div>
<div style="position:absolute;left:2288px;top:1382px;width:2px;height:32px;background:#d6d6d6"></div>
<svg style="position:absolute;left:453px;top:1374px" width="48" height="48" viewBox="0 0 48 48"><circle cx="24" cy="24" r="24" fill="#35b594"/><path fill="#fff" d="M21.2 14.3h5.6v11l6.4 9v1.5h-18.5v-1.5l6.5-9z"/><path fill="#35b594" d="M23 15.9h2.6v11.9h-2.6z"/></svg>
<div style="position:absolute;left:1338px;top:1371px;width:188px;height:50px;border:2px solid #8a8a8a;border-radius:27px;background:#efefef"></div>
<svg style="position:absolute;left:1750px;top:1384px" width="28" height="28" viewBox="0 0 28 28"><g fill="#1276be">
<path d="M0 0h11.8v3.8h-8v20.4h20.4v-8h3.8v11.8h-28z"/><path d="M16.2 0h11.8v11.8h-3.8v-5.3l-13.5 13.5-2.6-2.6 13.3-13.6h-5.2z"/></g></svg>
<div style="position:absolute;left:2314px;top:1372.5px;width:187px;height:47px;border:2px solid #dadada;border-radius:5px;background:#fff"></div>
<div style="position:absolute;left:2318px;top:1374.4px;width:107.5px;height:43.4px;border:2px solid #c2c2c2;border-radius:5px;background:#efefef"></div>
<svg style="position:absolute;left:2394px;top:1386px" width="24" height="24" viewBox="0 0 24 24"><path d="M3 3l18 18M21 3l-18 18" stroke="#444" stroke-width="4"/></svg>
<div style="position:absolute;left:66px;top:1454px;width:20px;height:20px;border:4px solid #c8c8c8;border-radius:4px;background:#fff"></div>
<div style="position:absolute;left:128px;top:1452px;width:2px;height:32px;background:#d6d6d6"></div>
<div style="position:absolute;left:370px;top:1452px;width:2px;height:32px;background:#d6d6d6"></div>
<div style="position:absolute;left:582px;top:1452px;width:2px;height:32px;background:#d6d6d6"></div>
<div style="position:absolute;left:1064px;top:1452px;width:2px;height:32px;background:#d6d6d6"></div>
<div style="position:absolute;left:1562px;top:1452px;width:2px;height:32px;background:#d6d6d6"></div>
<div style="position:absolute;left:1804px;top:1452px;width:2px;height:32px;background:#d6d6d6"></div>
<div style="position:absolute;left:2046px;top:1452px;width:2px;height:32px;background:#d6d6d6"></div>
<div style="position:absolute;left:2288px;top:1452px;width:2px;height:32px;background:#d6d6d6"></div>
<svg style="position:absolute;left:453px;top:1444px" width="48" height="48" viewBox="0 0 48 48"><circle cx="24" cy="24" r="24" fill="#ef3b63"/><path fill="#fff" d="M11 18l8.7 3.4v-3.4l10.6 3.4 1.3-10.5h4l1.6 26.7h-26.2z"/><path fill="#ef3b63" d="M29.2 25.3h3.7v1.4l-1.1 1.2 1.7 1.9v5.4h-5v-5.4l1.7-1.9-1-1.2z"/></svg>
<div style="position:absolute;left:1338px;top:1441px;width:188px;height:50px;border:2px solid #8a8a8a;border-radius:27px;background:#efefef"></div>
<svg style="position:absolute;left:1750px;top:1454px" width="28" height="28" viewBox="0 0 28 28"><g fill="#1276be">
<path d="M0 0h11.8v3.8h-8v20.4h20.4v-8h3.8v11.8h-28z"/><path d="M16.2 0h11.8v11.8h-3.8v-5.3l-13.5 13.5-2.6-2.6 13.3-13.6h-5.2z"/></g></svg>
<div style="position:absolute;left:2314px;top:1442.5px;width:187px;height:47px;border:2px solid #dadada;border-radius:5px;background:#fff"></div>
<div style="position:absolute;left:2318px;top:1444.4px;width:107.5px;height:43.4px;border:2px solid #c2c2c2;border-radius:5px;background:#efefef"></div>
<svg style="position:absolute;left:2394px;top:1456px" width="24" height="24" viewBox="0 0 24 24"><path d="M3 3l18 18M21 3l-18 18" stroke="#444" stroke-width="4"/></svg>
<div style="position:absolute;left:0;top:1500px;width:2560px;height:60px;background:#222"></div>
<div class="t" style="left:148.00px;top:25.99px;font-size:28.84px;line-height:28.84px;font-weight:400;color:#fff;transform:scaleX(0.8710);transform-origin:1px 0">SCHEDULING</div>
<div class="t" style="left:345.00px;top:25.99px;font-size:28.84px;line-height:28.84px;font-weight:400;-webkit-text-stroke:0.35px currentColor;color:#fff;letter-spacing:-0.500px">Request Dashboard</div>
<div class="t" style="left:634.00px;top:25.99px;font-size:28.84px;line-height:28.84px;font-weight:400;-webkit-text-stroke:0.35px currentColor;color:#fff;letter-spacing:-1.000px">Tasks</div>
<div class="t" style="left:746.25px;top:25.99px;font-size:28.84px;line-height:28.84px;font-weight:400;-webkit-text-stroke:0.35px currentColor;color:#fff;letter-spacing:0.136px">Availability</div>
<div class="t" style="left:923.50px;top:25.99px;font-size:28.84px;line-height:28.84px;font-weight:400;-webkit-text-stroke:0.35px currentColor;color:#fff;letter-spacing:-0.607px">Calendar</div>
<div class="t" style="left:1076.75px;top:25.99px;font-size:28.84px;line-height:28.84px;font-weight:400;-webkit-text-stroke:0.35px currentColor;color:#fff;letter-spacing:0.917px">Monitor</div>
<div class="t" style="left:1219.25px;top:25.99px;font-size:28.84px;line-height:28.84px;font-weight:400;-webkit-text-stroke:0.35px currentColor;color:#fff;letter-spacing:-1.036px">Resource</div>
<div class="t" style="left:2227.40px;top:25.99px;font-size:28.84px;line-height:28.84px;font-weight:400;color:#fff;transform:scaleX(0.7745);transform-origin:2px 0">ESP</div>
<div class="t" style="left:2305.80px;top:25.99px;font-size:28.84px;line-height:28.84px;font-weight:400;color:#fff;letter-spacing:-0.880px">Sara Laredo</div>
<div class="t" style="left:31.00px;top:101.74px;font-size:28.84px;line-height:28.84px;font-weight:400;-webkit-text-stroke:0.65px currentColor;color:#222;letter-spacing:0.688px">Request Dashboard</div>
<div class="t" style="left:31.00px;top:138.99px;font-size:24.72px;line-height:24.72px;font-weight:400;color:#333;letter-spacing:0.030px">Plan and manage Requests and track Request status at ease. Use status card to filter Request or Tasks</div>
<div class="t" style="left:2345.75px;top:117.99px;font-size:26.78px;line-height:26.78px;font-weight:400;-webkit-text-stroke:0.65px currentColor;color:#fff;letter-spacing:0.425px">New Request</div>
<div class="t" style="left:31.00px;top:202.99px;font-size:26.78px;line-height:26.78px;font-weight:400;-webkit-text-stroke:0.65px currentColor;color:#1275bb;letter-spacing:0.429px">Requests</div>
<div class="t" style="left:181.00px;top:202.99px;font-size:26.78px;line-height:26.78px;font-weight:400;-webkit-text-stroke:0.65px currentColor;color:#1275bb;letter-spacing:0.250px">Tasks</div>
<div class="t" style="left:283.75px;top:202.99px;font-size:26.78px;line-height:26.78px;font-weight:400;-webkit-text-stroke:0.65px currentColor;color:#1275bb;letter-spacing:1.208px">History</div>
<div class="t" style="left:31.00px;top:279.74px;font-size:28.84px;line-height:28.84px;font-weight:400;-webkit-text-stroke:0.65px currentColor;color:#444;letter-spacing:0.429px">Requests</div>
<div class="t" style="left:111.75px;top:349.74px;font-size:28.84px;line-height:28.84px;font-weight:400;color:#222;letter-spacing:0.500px">Pending</div>
<div class="t" style="left:530.50px;top:349.74px;font-size:28.84px;line-height:28.84px;font-weight:400;color:#222;letter-spacing:0.000px">Due Soon</div>
<div class="t" style="left:949.00px;top:349.74px;font-size:28.84px;line-height:28.84px;font-weight:400;color:#222;letter-spacing:0.111px">Unassigned</div>
<div class="t" style="left:1295.50px;top:279.49px;font-size:28.84px;line-height:28.84px;font-weight:400;-webkit-text-stroke:0.65px currentColor;color:#444;letter-spacing:0.000px">New Requests</div>
<div class="t" style="left:1328.00px;top:341.24px;font-size:24.72px;line-height:24.72px;font-weight:400;-webkit-text-stroke:0.65px currentColor;color:#444;letter-spacing:1.000px">Name</div>
<div class="t" style="left:1672.25px;top:341.24px;font-size:24.72px;line-height:24.72px;font-weight:400;-webkit-text-stroke:0.65px currentColor;color:#444;letter-spacing:1.050px">Destination</div>
<div class="t" style="left:1912.00px;top:341.24px;font-size:24.72px;line-height:24.72px;font-weight:400;-webkit-text-stroke:0.65px currentColor;color:#444;letter-spacing:0.692px">Customer Name</div>
<div class="t" style="left:2256.30px;top:341.24px;font-size:24.72px;line-height:24.72px;font-weight:400;-webkit-text-stroke:0.65px currentColor;color:#444;letter-spacing:0.200px">Time Received</div>
<div class="t" style="left:1328.00px;top:377.19px;font-size:24.72px;line-height:24.72px;font-weight:400;-webkit-text-stroke:0.65px currentColor;color:#1275bb;letter-spacing:-0.432px">HPLC Results</div>
<div class="t" style="left:1671.25px;top:377.19px;font-size:24.72px;line-height:24.72px;font-weight:400;color:#444;transform:scaleX(0.9409);transform-origin:2px 0">LIMS</div>
<div class="t" style="left:1911.00px;top:377.19px;font-size:24.72px;line-height:24.72px;font-weight:400;color:#444;letter-spacing:-0.133px">Famous Lab</div>
<div class="t" style="left:2254.30px;top:377.19px;font-size:24.72px;line-height:24.72px;font-weight:400;color:#444;transform:scaleX(1.0336);transform-origin:2px 0">10/20/2023 11:28 AM</div>
<div class="t" style="left:1328.00px;top:413.29px;font-size:24.72px;line-height:24.72px;font-weight:400;-webkit-text-stroke:0.65px currentColor;color:#1275bb;letter-spacing:0.673px">Stability Test</div>
<div class="t" style="left:1671.25px;top:413.29px;font-size:24.72px;line-height:24.72px;font-weight:400;color:#444;transform:scaleX(0.9409);transform-origin:2px 0">LIMS</div>
<div class="t" style="left:1913.00px;top:413.29px;font-size:24.72px;line-height:24.72px;font-weight:400;color:#444;letter-spacing:0.043px">Therapeutic Lab</div>
<div class="t" style="left:2254.30px;top:413.29px;font-size:24.72px;line-height:24.72px;font-weight:400;color:#444;transform:scaleX(1.0336);transform-origin:2px 0">10/20/2023 11:25 AM</div>
<div class="t" style="left:1328.00px;top:449.39px;font-size:24.72px;line-height:24.72px;font-weight:400;-webkit-text-stroke:0.65px currentColor;color:#1275bb;letter-spacing:-0.357px">Recipe 1</div>
<div class="t" style="left:1671.25px;top:449.39px;font-size:24.72px;line-height:24.72px;font-weight:400;color:#444;transform:scaleX(0.9069);transform-origin:2px 0">MES</div>
<div class="t" style="left:1911.00px;top:449.39px;font-size:24.72px;line-height:24.72px;font-weight:400;color:#444;letter-spacing:0.111px">Pharma Lab</div>
<div class="t" style="left:2254.30px;top:449.39px;font-size:24.72px;line-height:24.72px;font-weight:400;color:#444;transform:scaleX(1.0336);transform-origin:2px 0">10/20/2023 11:22 AM</div>
<div class="t" style="left:31.00px;top:543.49px;font-size:28.84px;line-height:28.84px;font-weight:400;-webkit-text-stroke:0.65px currentColor;color:#444;letter-spacing:0.300px">Request Backlogs</div>
<div class="t" style="left:1724.50px;top:544.74px;font-size:26.78px;line-height:26.78px;font-weight:400;-webkit-text-stroke:0.65px currentColor;color:#444;letter-spacing:0.583px">Archive</div>
<div class="t" style="left:1899.50px;top:543.49px;font-size:28.84px;line-height:28.84px;font-weight:400;color:#8a8a8a;letter-spacing:-0.038px">Filter Request</div>
<div class="t" style="left:2270.00px;top:545.24px;font-size:26.78px;line-height:26.78px;font-weight:400;-webkit-text-stroke:0.65px currentColor;color:#444;letter-spacing:0.312px">Ready for Schedule</div>
<div class="t" style="left:151.70px;top:613.49px;font-size:28.84px;line-height:28.84px;font-weight:400;color:#222;letter-spacing:0.000px">Request Name</div>
<div class="t" style="left:393.75px;top:613.49px;font-size:28.84px;line-height:28.84px;font-weight:400;color:#222;letter-spacing:0.625px">Destination</div>
<div class="t" style="left:605.60px;top:613.49px;font-size:28.84px;line-height:28.84px;font-weight:400;color:#222;letter-spacing:0.671px">Priority</div>
<div class="t" style="left:847.00px;top:613.49px;font-size:28.84px;line-height:28.84px;font-weight:400;color:#222;letter-spacing:0.143px">Due Date</div>
<div class="t" style="left:1089.00px;top:613.49px;font-size:28.84px;line-height:28.84px;font-weight:400;color:#222;letter-spacing:1.000px">Duration</div>
<div class="t" style="left:1331.25px;top:613.49px;font-size:28.84px;line-height:28.84px;font-weight:400;color:#222;letter-spacing:-0.192px">Request Status</div>
<div class="t" style="left:1588.75px;top:613.49px;font-size:28.84px;line-height:28.84px;font-weight:400;color:#222;letter-spacing:0.173px">Request Portal</div>
<div class="t" style="left:1832.10px;top:613.49px;font-size:28.84px;line-height:28.84px;font-weight:400;color:#222;letter-spacing:-0.062px">Requester</div>
<div class="t" style="left:2073.80px;top:613.49px;font-size:28.84px;line-height:28.84px;font-weight:400;color:#222;letter-spacing:0.092px">Customer Na...</div>
<div class="t" style="left:2316.00px;top:613.49px;font-size:28.84px;line-height:28.84px;font-weight:400;color:#222;letter-spacing:-0.500px">Tags</div>
<div class="t" style="left:146.50px;top:684.69px;font-size:28.84px;line-height:28.84px;font-weight:400;-webkit-text-stroke:0.65px currentColor;color:#1275bb;letter-spacing:0.415px">Vaccine Test 2</div>
<div class="t" style="left:608.40px;top:684.99px;font-size:28.84px;line-height:28.84px;font-weight:400;color:#444;letter-spacing:-0.350px">Low</div>
<div class="t" style="left:847.00px;top:684.69px;font-size:28.84px;line-height:28.84px;font-weight:400;color:#222;letter-spacing:0.611px">10/23/2023</div>
<div class="t" style="left:1089.00px;top:684.69px;font-size:28.84px;line-height:28.84px;font-weight:400;color:#222;letter-spacing:0.500px">10 hours</div>
<div class="t" style="left:1369.88px;top:684.69px;font-size:28.84px;line-height:28.84px;font-weight:400;-webkit-text-stroke:0.65px currentColor;color:#f47920;letter-spacing:0.607px">Due soon</div>
<div class="t" style="left:1587.80px;top:684.69px;font-size:28.84px;line-height:28.84px;font-weight:400;color:#222;letter-spacing:-0.318px">Batch Cre...</div>
<div class="t" style="left:1829.80px;top:684.69px;font-size:28.84px;line-height:28.84px;font-weight:400;color:#222;letter-spacing:0.111px">Bob Parker</div>
<div class="t" style="left:2071.40px;top:684.69px;font-size:28.84px;line-height:28.84px;font-weight:400;color:#222;letter-spacing:-0.083px">Precision Lab</div>
<div class="t" style="left:2329.00px;top:686.99px;font-size:24.72px;line-height:24.72px;font-weight:400;-webkit-text-stroke:0.35px currentColor;color:#888;letter-spacing:-0.867px">Tag1</div>
<div class="t" style="left:145.50px;top:754.69px;font-size:28.84px;line-height:28.84px;font-weight:400;-webkit-text-stroke:0.65px currentColor;color:#1275bb;letter-spacing:0.213px">Clinical Samp...</div>
<div class="t" style="left:608.40px;top:754.99px;font-size:28.84px;line-height:28.84px;font-weight:400;color:#f47920;letter-spacing:1.240px">Medium</div>
<div class="t" style="left:847.00px;top:754.69px;font-size:28.84px;line-height:28.84px;font-weight:400;color:#222;letter-spacing:0.611px">10/23/2023</div>
<div class="t" style="left:1089.00px;top:754.69px;font-size:28.84px;line-height:28.84px;font-weight:400;color:#222;letter-spacing:0.500px">16 hours</div>
<div class="t" style="left:1354.70px;top:754.69px;font-size:28.84px;line-height:28.84px;font-weight:400;-webkit-text-stroke:0.65px currentColor;color:#c0282d;letter-spacing:0.622px">Unassigned</div>
<div class="t" style="left:1587.80px;top:754.69px;font-size:28.84px;line-height:28.84px;font-weight:400;color:#222;transform:scaleX(0.8850);transform-origin:2px 0">MES</div>
<div class="t" style="left:1829.80px;top:754.69px;font-size:28.84px;line-height:28.84px;font-weight:400;color:#222;letter-spacing:-0.536px">Lindon Jacks...</div>
<div class="t" style="left:2071.40px;top:754.69px;font-size:28.84px;line-height:28.84px;font-weight:400;color:#222;letter-spacing:-0.083px">Precision Lab</div>
<div class="t" style="left:2329.00px;top:756.99px;font-size:24.72px;line-height:24.72px;font-weight:400;-webkit-text-stroke:0.35px currentColor;color:#888;letter-spacing:-0.867px">Tag1</div>
<div class="t" style="left:145.50px;top:824.69px;font-size:28.84px;line-height:28.84px;font-weight:400;-webkit-text-stroke:0.65px currentColor;color:#1275bb;letter-spacing:0.469px">Stability Requ...</div>
<div class="t" style="left:608.40px;top:824.99px;font-size:28.84px;line-height:28.84px;font-weight:400;color:#444;letter-spacing:0.250px">Rerun</div>
<div class="t" style="left:847.00px;top:824.69px;font-size:28.84px;line-height:28.84px;font-weight:400;color:#222;letter-spacing:0.611px">10/23/2023</div>
<div class="t" style="left:1090.00px;top:824.69px;font-size:28.84px;line-height:28.84px;font-weight:400;color:#222;letter-spacing:0.500px">8 hours</div>
<div class="t" style="left:1369.88px;top:824.69px;font-size:28.84px;line-height:28.84px;font-weight:400;-webkit-text-stroke:0.65px currentColor;color:#f47920;letter-spacing:0.607px">Due soon</div>
<div class="t" style="left:1587.80px;top:824.69px;font-size:28.84px;line-height:28.84px;font-weight:400;color:#222;letter-spacing:0.700px">Biorepo</div>
<div class="t" style="left:1830.80px;top:824.69px;font-size:28.84px;line-height:28.84px;font-weight:400;color:#222;letter-spacing:-0.300px">Sara Laredo</div>
<div class="t" style="left:2071.40px;top:824.69px;font-size:28.84px;line-height:28.84px;font-weight:400;color:#222;letter-spacing:-0.083px">Precision Lab</div>
<div class="t" style="left:2329.00px;top:826.99px;font-size:24.72px;line-height:24.72px;font-weight:400;-webkit-text-stroke:0.35px currentColor;color:#888;letter-spacing:-0.867px">Tag1</div>
<div class="t" style="left:145.50px;top:894.69px;font-size:28.84px;line-height:28.84px;font-weight:400;-webkit-text-stroke:0.65px currentColor;color:#1275bb;letter-spacing:0.469px">Stability Requ...</div>
<div class="t" style="left:608.40px;top:894.99px;font-size:28.84px;line-height:28.84px;font-weight:400;color:#f47920;letter-spacing:1.240px">Medium</div>
<div class="t" style="left:847.00px;top:894.69px;font-size:28.84px;line-height:28.84px;font-weight:400;color:#222;letter-spacing:0.611px">10/23/2023</div>
<div class="t" style="left:1090.00px;top:894.69px;font-size:28.84px;line-height:28.84px;font-weight:400;color:#222;letter-spacing:0.357px">24 hours</div>
<div class="t" style="left:1378.05px;top:894.69px;font-size:28.84px;line-height:28.84px;font-weight:400;-webkit-text-stroke:0.65px currentColor;color:#444;letter-spacing:0.817px">Pending</div>
<div class="t" style="left:1587.80px;top:894.69px;font-size:28.84px;line-height:28.84px;font-weight:400;color:#222;transform:scaleX(0.9378);transform-origin:2px 0">LIMS Req...</div>
<div class="t" style="left:1829.80px;top:894.69px;font-size:28.84px;line-height:28.84px;font-weight:400;color:#222;letter-spacing:-0.250px">Eileen Strickl...</div>
<div class="t" style="left:2071.40px;top:894.69px;font-size:28.84px;line-height:28.84px;font-weight:400;color:#222;letter-spacing:-0.083px">Precision Lab</div>
<div class="t" style="left:2329.00px;top:896.99px;font-size:24.72px;line-height:24.72px;font-weight:400;-webkit-text-stroke:0.35px currentColor;color:#888;letter-spacing:-0.867px">Tag1</div>
<div class="t" style="left:145.50px;top:964.69px;font-size:28.84px;line-height:28.84px;font-weight:400;-webkit-text-stroke:0.65px currentColor;color:#1275bb;letter-spacing:0.213px">Clinical Samp...</div>
<div class="t" style="left:608.40px;top:964.99px;font-size:28.84px;line-height:28.84px;font-weight:400;color:#b8282d;letter-spacing:0.600px">High</div>
<div class="t" style="left:847.00px;top:964.69px;font-size:28.84px;line-height:28.84px;font-weight:400;color:#222;letter-spacing:0.611px">10/23/2023</div>
<div class="t" style="left:1090.00px;top:964.69px;font-size:28.84px;line-height:28.84px;font-weight:400;color:#222;letter-spacing:0.500px">5 hours</div>
<div class="t" style="left:1378.05px;top:964.69px;font-size:28.84px;line-height:28.84px;font-weight:400;-webkit-text-stroke:0.65px currentColor;color:#444;letter-spacing:0.817px">Pending</div>
<div class="t" style="left:1587.80px;top:964.69px;font-size:28.84px;line-height:28.84px;font-weight:400;color:#222;transform:scaleX(0.8850);transform-origin:2px 0">MES</div>
<div class="t" style="left:1831.80px;top:964.69px;font-size:28.84px;line-height:28.84px;font-weight:400;color:#222;letter-spacing:-0.308px">Tom Jankowi...</div>
<div class="t" style="left:2071.40px;top:964.69px;font-size:28.84px;line-height:28.84px;font-weight:400;color:#222;letter-spacing:-0.083px">Precision Lab</div>
<div class="t" style="left:2329.00px;top:966.99px;font-size:24.72px;line-height:24.72px;font-weight:400;-webkit-text-stroke:0.35px currentColor;color:#888;letter-spacing:-0.867px">Tag1</div>
<div class="t" style="left:145.50px;top:1034.69px;font-size:28.84px;line-height:28.84px;font-weight:400;-webkit-text-stroke:0.65px currentColor;color:#1275bb;letter-spacing:0.213px">Clinical Samp...</div>
<div class="t" style="left:608.40px;top:1034.99px;font-size:28.84px;line-height:28.84px;font-weight:400;color:#444;letter-spacing:-0.350px">Low</div>
<div class="t" style="left:847.00px;top:1034.69px;font-size:28.84px;line-height:28.84px;font-weight:400;color:#222;letter-spacing:0.611px">10/23/2023</div>
<div class="t" style="left:1090.00px;top:1034.69px;font-size:28.84px;line-height:28.84px;font-weight:400;color:#222;letter-spacing:0.500px">8 hours</div>
<div class="t" style="left:1378.05px;top:1034.69px;font-size:28.84px;line-height:28.84px;font-weight:400;-webkit-text-stroke:0.65px currentColor;color:#444;letter-spacing:0.817px">Pending</div>
<div class="t" style="left:1587.80px;top:1034.69px;font-size:28.84px;line-height:28.84px;font-weight:400;color:#222;transform:scaleX(0.8850);transform-origin:2px 0">MES</div>
<div class="t" style="left:1829.80px;top:1034.69px;font-size:28.84px;line-height:28.84px;font-weight:400;color:#222;letter-spacing:-0.775px">Paul Rhea</div>
<div class="t" style="left:2071.40px;top:1034.69px;font-size:28.84px;line-height:28.84px;font-weight:400;color:#222;letter-spacing:-0.083px">Precision Lab</div>
<div class="t" style="left:2329.00px;top:1036.99px;font-size:24.72px;line-height:24.72px;font-weight:400;-webkit-text-stroke:0.35px currentColor;color:#888;letter-spacing:-0.867px">Tag1</div>
<div class="t" style="left:145.50px;top:1104.69px;font-size:28.84px;line-height:28.84px;font-weight:400;-webkit-text-stroke:0.65px currentColor;color:#1275bb;letter-spacing:0.213px">Clinical Samp...</div>
<div class="t" style="left:608.40px;top:1104.99px;font-size:28.84px;line-height:28.84px;font-weight:400;color:#444;letter-spacing:-0.350px">Low</div>
<div class="t" style="left:847.00px;top:1104.69px;font-size:28.84px;line-height:28.84px;font-weight:400;color:#222;letter-spacing:0.611px">10/23/2023</div>
<div class="t" style="left:1090.00px;top:1104.69px;font-size:28.84px;line-height:28.84px;font-weight:400;color:#222;letter-spacing:0.500px">3 hours</div>
<div class="t" style="left:1378.05px;top:1104.69px;font-size:28.84px;line-height:28.84px;font-weight:400;-webkit-text-stroke:0.65px currentColor;color:#444;letter-spacing:0.817px">Pending</div>
<div class="t" style="left:1587.80px;top:1104.69px;font-size:28.84px;line-height:28.84px;font-weight:400;color:#222;letter-spacing:-0.318px">Batch Cre...</div>
<div class="t" style="left:1829.80px;top:1104.69px;font-size:28.84px;line-height:28.84px;font-weight:400;color:#222;letter-spacing:0.111px">Bob Parker</div>
<div class="t" style="left:2071.40px;top:1104.69px;font-size:28.84px;line-height:28.84px;font-weight:400;color:#222;letter-spacing:-0.083px">Precision Lab</div>
<div class="t" style="left:2329.00px;top:1106.99px;font-size:24.72px;line-height:24.72px;font-weight:400;-webkit-text-stroke:0.35px currentColor;color:#888;letter-spacing:-0.867px">Tag1</div>
<div class="t" style="left:144.50px;top:1174.69px;font-size:28.84px;line-height:28.84px;font-weight:400;-webkit-text-stroke:0.65px currentColor;color:#1275bb;transform:scaleX(0.9050);transform-origin:2px 0">NGS</div>
<div class="t" style="left:608.40px;top:1174.99px;font-size:28.84px;line-height:28.84px;font-weight:400;color:#b8282d;letter-spacing:0.600px">High</div>
<div class="t" style="left:847.00px;top:1174.69px;font-size:28.84px;line-height:28.84px;font-weight:400;color:#222;letter-spacing:0.611px">10/23/2023</div>
<div class="t" style="left:1090.00px;top:1174.69px;font-size:28.84px;line-height:28.84px;font-weight:400;color:#222;letter-spacing:0.500px">9 hours</div>
<div class="t" style="left:1378.05px;top:1174.69px;font-size:28.84px;line-height:28.84px;font-weight:400;-webkit-text-stroke:0.65px currentColor;color:#444;letter-spacing:0.817px">Pending</div>
<div class="t" style="left:1587.80px;top:1174.69px;font-size:28.84px;line-height:28.84px;font-weight:400;color:#222;letter-spacing:0.167px">Project</div>
<div class="t" style="left:1830.80px;top:1174.69px;font-size:28.84px;line-height:28.84px;font-weight:400;color:#222;letter-spacing:-0.236px">Samantha Lee</div>
<div class="t" style="left:2071.40px;top:1174.69px;font-size:28.84px;line-height:28.84px;font-weight:400;color:#222;letter-spacing:-0.083px">Precision Lab</div>
<div class="t" style="left:2329.00px;top:1176.99px;font-size:24.72px;line-height:24.72px;font-weight:400;-webkit-text-stroke:0.35px currentColor;color:#888;letter-spacing:-0.867px">Tag1</div>
<div class="t" style="left:145.50px;top:1244.69px;font-size:28.84px;line-height:28.84px;font-weight:400;-webkit-text-stroke:0.65px currentColor;color:#1275bb;letter-spacing:0.469px">Stability Requ...</div>
<div class="t" style="left:608.40px;top:1244.99px;font-size:28.84px;line-height:28.84px;font-weight:400;color:#f47920;letter-spacing:1.240px">Medium</div>
<div class="t" style="left:847.00px;top:1244.69px;font-size:28.84px;line-height:28.84px;font-weight:400;color:#222;letter-spacing:0.611px">10/23/2023</div>
<div class="t" style="left:1089.00px;top:1244.69px;font-size:28.84px;line-height:28.84px;font-weight:400;color:#222;letter-spacing:0.500px">10 hours</div>
<div class="t" style="left:1378.05px;top:1244.69px;font-size:28.84px;line-height:28.84px;font-weight:400;-webkit-text-stroke:0.65px currentColor;color:#444;letter-spacing:0.817px">Pending</div>
<div class="t" style="left:1587.80px;top:1244.69px;font-size:28.84px;line-height:28.84px;font-weight:400;color:#222;letter-spacing:0.167px">Project</div>
<div class="t" style="left:1829.80px;top:1244.69px;font-size:28.84px;line-height:28.84px;font-weight:400;color:#222;letter-spacing:-0.055px">Paula Carmen</div>
<div class="t" style="left:2071.40px;top:1244.69px;font-size:28.84px;line-height:28.84px;font-weight:400;color:#222;letter-spacing:-0.083px">Precision Lab</div>
<div class="t" style="left:2329.00px;top:1246.99px;font-size:24.72px;line-height:24.72px;font-weight:400;-webkit-text-stroke:0.35px currentColor;color:#888;letter-spacing:-0.867px">Tag1</div>
<div class="t" style="left:145.50px;top:1314.69px;font-size:28.84px;line-height:28.84px;font-weight:400;-webkit-text-stroke:0.65px currentColor;color:#1275bb;letter-spacing:0.469px">Stability Requ...</div>
<div class="t" style="left:608.40px;top:1314.99px;font-size:28.84px;line-height:28.84px;font-weight:400;color:#f47920;letter-spacing:1.240px">Medium</div>
<div class="t" style="left:847.00px;top:1314.69px;font-size:28.84px;line-height:28.84px;font-weight:400;color:#222;letter-spacing:0.611px">10/23/2023</div>
<div class="t" style="left:1089.00px;top:1314.69px;font-size:28.84px;line-height:28.84px;font-weight:400;color:#222;letter-spacing:0.500px">10 hours</div>
<div class="t" style="left:1378.05px;top:1314.69px;font-size:28.84px;line-height:28.84px;font-weight:400;-webkit-text-stroke:0.65px currentColor;color:#444;letter-spacing:0.817px">Pending</div>
<div class="t" style="left:1587.80px;top:1314.69px;font-size:28.84px;line-height:28.84px;font-weight:400;color:#222;letter-spacing:0.167px">Project</div>
<div class="t" style="left:1829.80px;top:1314.69px;font-size:28.84px;line-height:28.84px;font-weight:400;color:#222;letter-spacing:0.111px">Bob Parker</div>
<div class="t" style="left:2071.40px;top:1314.69px;font-size:28.84px;line-height:28.84px;font-weight:400;color:#222;letter-spacing:-0.083px">Precision Lab</div>
<div class="t" style="left:2329.00px;top:1316.99px;font-size:24.72px;line-height:24.72px;font-weight:400;-webkit-text-stroke:0.35px currentColor;color:#888;letter-spacing:-0.867px">Tag1</div>
<div class="t" style="left:145.50px;top:1384.69px;font-size:28.84px;line-height:28.84px;font-weight:400;-webkit-text-stroke:0.65px currentColor;color:#1275bb;letter-spacing:0.469px">Stability Requ...</div>
<div class="t" style="left:608.40px;top:1384.99px;font-size:28.84px;line-height:28.84px;font-weight:400;color:#444;letter-spacing:0.250px">Rerun</div>
<div class="t" style="left:847.00px;top:1384.69px;font-size:28.84px;line-height:28.84px;font-weight:400;color:#222;letter-spacing:0.611px">10/23/2023</div>
<div class="t" style="left:1089.00px;top:1384.69px;font-size:28.84px;line-height:28.84px;font-weight:400;color:#222;letter-spacing:0.500px">10 hours</div>
<div class="t" style="left:1378.05px;top:1384.69px;font-size:28.84px;line-height:28.84px;font-weight:400;-webkit-text-stroke:0.65px currentColor;color:#444;letter-spacing:0.817px">Pending</div>
<div class="t" style="left:1587.80px;top:1384.69px;font-size:28.84px;line-height:28.84px;font-weight:400;color:#222;letter-spacing:0.167px">Project</div>
<div class="t" style="left:1829.00px;top:1384.69px;font-size:28.84px;line-height:28.84px;font-weight:400;color:#222;letter-spacing:-0.300px">Jack Lindon</div>
<div class="t" style="left:2071.40px;top:1384.69px;font-size:28.84px;line-height:28.84px;font-weight:400;color:#222;letter-spacing:-0.083px">Precision Lab</div>
<div class="t" style="left:2329.00px;top:1386.99px;font-size:24.72px;line-height:24.72px;font-weight:400;-webkit-text-stroke:0.35px currentColor;color:#888;letter-spacing:-0.867px">Tag1</div>
<div class="t" style="left:145.50px;top:1454.69px;font-size:28.84px;line-height:28.84px;font-weight:400;-webkit-text-stroke:0.65px currentColor;color:#1275bb;letter-spacing:0.469px">Stability Requ...</div>
<div class="t" style="left:608.40px;top:1454.99px;font-size:28.84px;line-height:28.84px;font-weight:400;color:#444;letter-spacing:-0.350px">Low</div>
<div class="t" style="left:847.00px;top:1454.69px;font-size:28.84px;line-height:28.84px;font-weight:400;color:#222;letter-spacing:0.611px">10/23/2023</div>
<div class="t" style="left:1089.00px;top:1454.69px;font-size:28.84px;line-height:28.84px;font-weight:400;color:#222;letter-spacing:0.500px">10 hours</div>
<div class="t" style="left:1378.05px;top:1454.69px;font-size:28.84px;line-height:28.84px;font-weight:400;-webkit-text-stroke:0.65px currentColor;color:#444;letter-spacing:0.817px">Pending</div>
<div class="t" style="left:1587.80px;top:1454.69px;font-size:28.84px;line-height:28.84px;font-weight:400;color:#222;transform:scaleX(0.8850);transform-origin:2px 0">MES</div>
<div class="t" style="left:1829.80px;top:1454.69px;font-size:28.84px;line-height:28.84px;font-weight:400;color:#222;letter-spacing:0.111px">Bob Parker</div>
<div class="t" style="left:2071.40px;top:1454.69px;font-size:28.84px;line-height:28.84px;font-weight:400;color:#222;letter-spacing:-0.083px">Precision Lab</div>
<div class="t" style="left:2329.00px;top:1456.99px;font-size:24.72px;line-height:24.72px;font-weight:400;-webkit-text-stroke:0.35px currentColor;color:#888;letter-spacing:-0.867px">Tag1</div>
<div class="t" style="left:32.00px;top:1518.99px;font-size:24.72px;line-height:24.72px;font-weight:400;color:#a6a6a6;letter-spacing:0.200px">non-versioned release</div>
<div class="t" style="left:793.00px;top:1518.99px;font-size:24.72px;line-height:24.72px;font-weight:400;color:#a6a6a6;transform:scaleX(0.9208);transform-origin:2px 0">DEVELOPMENT BUILD. NOT FOR PRODUCTION USE</div>
<div class="t" style="left:1877.00px;top:1518.99px;font-size:24.72px;line-height:24.72px;font-weight:400;color:#a6a6a6;letter-spacing:0.046px">Copyright © 2013-2023 L7 Informatics. All Rights Reserved</div>
</body></html>
